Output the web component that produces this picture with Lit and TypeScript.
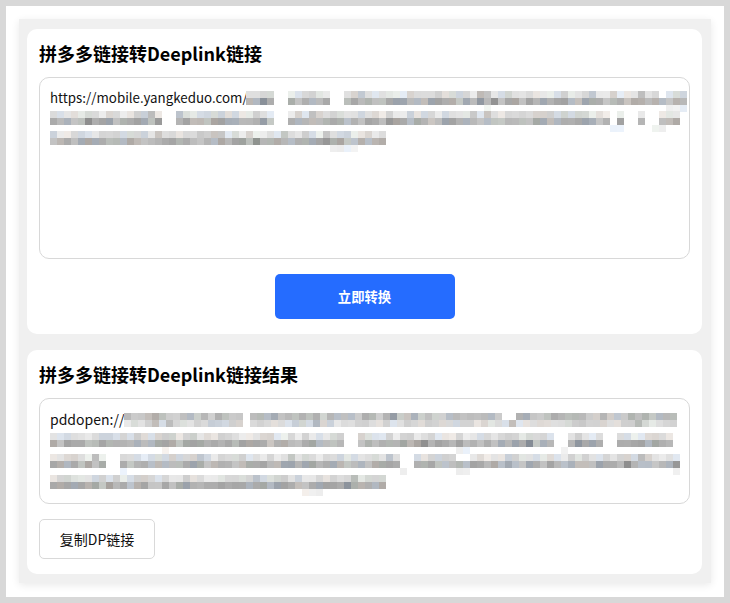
import { LitElement, html, css } from "lit";
import { customElement, property } from "lit/decorators.js";

type Gap = [number, number];
interface RowSpec { start: number; end: number; tone: number; spread: number; gaps: Gap[]; }

const CELL = 7;
let seed = 20240611;
const rnd = () => {
  seed = (seed * 1664525 + 1013904223) >>> 0;
  return seed / 4294967296;
};

function cellColor(tone: number, spread: number): string {
  const v = tone + (rnd() - 0.5) * spread - (rnd() > 0.92 ? 22 : 0);
  const tint = rnd();
  const r = v + (tint < 0.15 ? 5 : tint > 0.8 ? -7 : 0);
  const g = v + (tint > 0.45 && tint < 0.6 ? 4 : 0);
  const b = v + (tint > 0.8 ? 9 : tint < 0.15 ? -4 : 0);
  const c = (n: number) => Math.max(0, Math.min(255, Math.round(n)));
  return `rgb(${c(r)},${c(g)},${c(b)})`;
}

@customElement("mosaic-line")
class MosaicLine extends LitElement {
  @property({ attribute: false }) rows: RowSpec[] = [];
  static styles = css`
    :host { display: block; flex: none; margin-top: var(--mosaic-top, 3px); filter: blur(0.35px); }
    .row { display: flex; height: 7px; }
    .cell { flex: none; width: 7px; height: 7px; }
  `;
  render() {
    const origin = this.rows.length ? Math.min(...this.rows.map((r) => r.start)) : 0;
    return this.rows.map((r) => {
      const cells = [];
      for (let x = origin; x < r.end; x += CELL) {
        const off = x < r.start || r.gaps.some(([a, b]) => x + CELL > a && x < b);
        cells.push(off ? "transparent" : cellColor(r.tone, r.spread));
      }
      return html`<div class="row">${cells.map((c) => html`<span class="cell" style="background:${c}"></span>`)}</div>`;
    });
  }
}

const top = (start: number, end: number, gaps: Gap[] = []): RowSpec => ({ start, end, tone: 222, spread: 30, gaps });
const bot = (start: number, end: number, gaps: Gap[] = []): RowSpec => ({ start, end, tone: 180, spread: 36, gaps });
const under = (start: number, end: number, gaps: Gap[] = []): RowSpec => ({ start, end, tone: 240, spread: 8, gaps });

const INPUT: RowSpec[][] = [
  [top(245, 680, [[273, 281], [330, 337], [660, 665]]), bot(245, 680, [[273, 281], [330, 337]]), under(245, 680, [[245, 480], [490, 660]])],
  [top(50, 680, [[168, 175], [280, 287], [610, 616], [628, 634], [650, 656]]), bot(50, 680, [[168, 175], [280, 287], [610, 616], [628, 634], [650, 656]]), under(50, 680, [[50, 610], [624, 638], [644, 650], [666, 680]])],
  [top(50, 385), bot(50, 385), under(50, 385, [[50, 330], [358, 385]])],
];

const OUTPUT: RowSpec[][] = [
  [{ start: 127, end: 680, tone: 190, spread: 38, gaps: [[246, 252], [510, 516]] }, { start: 127, end: 680, tone: 218, spread: 30, gaps: [[246, 252]] }],
  [top(50, 672, [[350, 357], [556, 562], [608, 616]]), bot(50, 672, [[350, 357], [556, 562], [608, 616]]), under(50, 672, [[50, 160], [175, 290], [295, 455], [470, 560], [570, 610], [616, 672]])],
  [top(50, 680, [[110, 117], [405, 414], [462, 470]]), bot(50, 680, [[110, 117], [405, 414]]), under(50, 680, [[50, 118], [132, 400], [410, 450], [470, 672]])],
  [top(50, 385), bot(50, 385), under(50, 385, [[50, 300], [328, 385]])],
];

@customElement("app-root")
export class AppRoot extends LitElement {
  static styles = css`
    :host {
      display: block;
      font-family: "Noto Sans CJK SC", "Noto Sans", sans-serif;
      color: #000;
    }
    .window {
      box-sizing: border-box;
      height: 603px;
      border: 6px solid #d8d8d8;
      background: #fff;
      padding: 13px 13px 14px;
    }
    .panel {
      box-sizing: border-box;
      height: 100%;
      background: #f0f0f0;
      box-shadow: 0 2px 8px rgba(0, 0, 0, 0.09);
      padding: 10px 9px 9px 8px;
      display: flex;
      flex-direction: column;
      gap: 16px;
    }
    .card {
      background: #fff;
      border-radius: 10px;
      padding: 0 12px 15px;
    }
    h2 {
      margin: 0;
      height: 48px;
      font-size: 18px;
      line-height: 48px;
      font-weight: 700;
      white-space: nowrap;
    }
    .box {
      box-sizing: border-box;
      border: 1px solid #d8d8d8;
      border-radius: 10px;
      padding: 10px 0 0 10px;
      color: #111;
    }
    .input { height: 182px; font-size: 13.333px; }
    .output { height: 106px; font-size: 14px; --mosaic-top: 3.5px; }
    .line {
      display: flex;
      height: 20px;
      line-height: 20px;
      white-space: nowrap;
    }
    .output .line { height: 20.8px; line-height: 20.8px; }
    .prefix { flex: none; }
    .input .prefix { margin-right: -2px; }
    .submit-row {
      display: flex;
      justify-content: center;
      margin-top: 15px;
    }
    button {
      font-family: inherit;
      padding: 0;
      cursor: pointer;
    }
    .primary {
      width: 180px;
      height: 45px;
      border: none;
      border-radius: 5px;
      background: #256cff;
      color: #fff;
      font-size: 13.333px;
      font-weight: 700;
    }
    .secondary {
      display: block;
      width: 116px;
      height: 40px;
      margin-top: 15px;
      border: 1px solid #d9d9d9;
      border-radius: 5px;
      background: #fff;
      color: #111;
      font-size: 14px;
    }
  `;

  private renderLines(prefix: string, lines: RowSpec[][]) {
    return lines.map(
      (rows, i) => html`<div class="line">
        ${i === 0 ? html`<span class="prefix">${prefix}</span>` : ""}
        <mosaic-line .rows=${rows}></mosaic-line>
      </div>`
    );
  }

  render() {
    return html`
      <div class="window">
        <div class="panel">
          <section class="card">
            <h2>拼多多链接转Deeplink链接</h2>
            <div class="box input">${this.renderLines("https://mobile.yangkeduo.com/", INPUT)}</div>
            <div class="submit-row"><button class="primary">立即转换</button></div>
          </section>
          <section class="card">
            <h2>拼多多链接转Deeplink链接结果</h2>
            <div class="box output">${this.renderLines("pddopen://", OUTPUT)}</div>
            <button class="secondary">复制DP链接</button>
          </section>
        </div>
      </div>
    `;
  }
}
